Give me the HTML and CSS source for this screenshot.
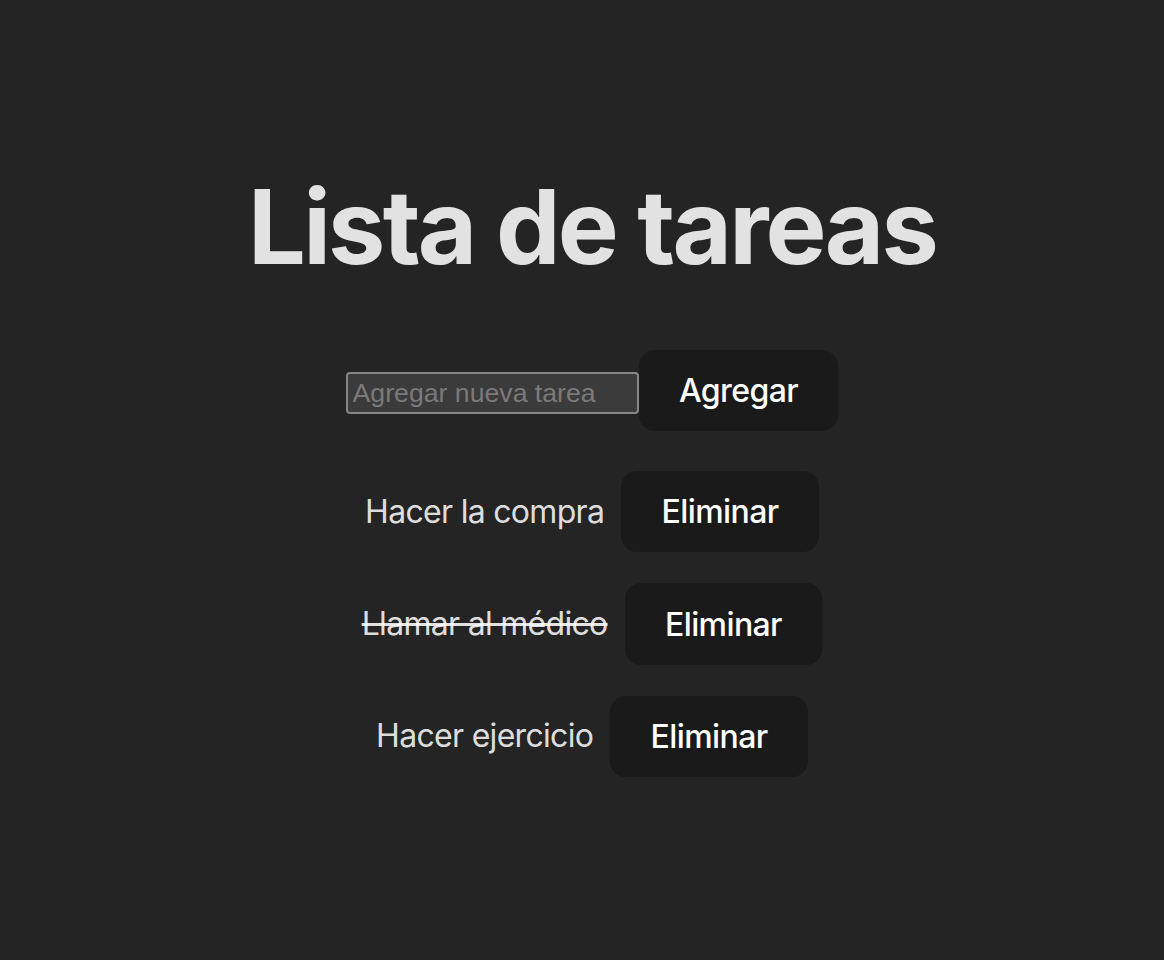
FILE: index.html
```html
<!DOCTYPE html>
<html lang="es">
<head>
<meta charset="utf-8">
<title>Lista de tareas</title>
<link rel="stylesheet" href="styles.css">
</head>
<body>
<div class="app">
  <h1 class="title">Lista de tareas</h1>
  <form class="add-form">
    <input class="add-input" type="text" placeholder="Agregar nueva tarea"><button class="btn" type="button">Agregar</button>
  </form>
  <ul class="tasks">
    <li class="task"><span class="task-text">Hacer la compra</span><button class="btn" type="button">Eliminar</button></li>
    <li class="task"><span class="task-text done">Llamar al médico</span><button class="btn" type="button">Eliminar</button></li>
    <li class="task"><span class="task-text">Hacer ejercicio</span><button class="btn" type="button">Eliminar</button></li>
  </ul>
</div>
</body>
</html>
```

FILE: styles.css
```css
html, body {
  margin: 0;
  padding: 0;
}
body {
  background: #242424;
  color: rgba(255, 255, 255, 0.87);
  font-family: Inter, "Noto Sans", sans-serif;
  font-size: 32px;
  line-height: 1.5;
  font-weight: 400;
  min-height: 960px;
}
.app {
  display: flex;
  flex-direction: column;
  align-items: center;
  padding: 171px 0 0 20px;
  text-align: center;
}
.title {
  margin: 0;
  font-size: 102.4px;
  line-height: 1.1;
  font-weight: 700;
  letter-spacing: -2.8px;
}
.add-form {
  margin: 66px 0 0 0;
  display: flex;
  align-items: baseline;
}
.add-input {
  box-sizing: border-box;
  width: 293px;
  height: 42px;
  padding: 2px 5px;
  border: 2px solid #858585;
  border-radius: 4px;
  background: #3b3b3b;
  color: #ffffff;
  font-family: "Liberation Sans", Arial, sans-serif;
  font-size: 26.67px;
  margin: 0;
}
.add-input::placeholder {
  color: #7a7a7a;
}
.btn {
  font-family: Inter, "Noto Sans", sans-serif;
  font-size: 32px;
  font-weight: 500;
  line-height: normal;
  letter-spacing: -0.6px;
  padding: 19.2px 38.4px;
  border: 2px solid transparent;
  border-radius: 16px;
  background: #1a1a1a;
  color: #ffffff;
  margin: 0;
  cursor: pointer;
}
.tasks {
  list-style: none;
  margin: 40px 0 0 0;
  padding: 0;
  display: flex;
  flex-direction: column;
  align-items: center;
  gap: 31px;
}
.task {
  display: flex;
  align-items: center;
  gap: 17px;
}
.task-text {
  letter-spacing: -0.7px;
}
.task-text.done {
  text-decoration: line-through;
}
```
